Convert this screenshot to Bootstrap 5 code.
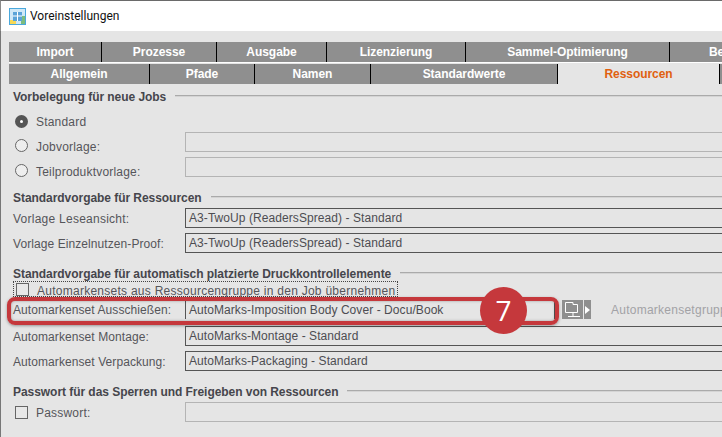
<!DOCTYPE html>
<html lang="de">
<head>
<meta charset="utf-8">
<title>Voreinstellungen</title>
<link href="https://cdn.jsdelivr.net/npm/bootstrap@5.3.0/dist/css/bootstrap.min.css" rel="stylesheet">
<style>
html,body{width:722px;height:437px;overflow:hidden;margin:0}
body{background:#e5e5e5;font-family:"Liberation Sans",Arial,sans-serif;font-size:12px;line-height:14px;color:#4a4a50;position:relative}
.win-top{height:31px;background:#fff;border-top:1px solid #6a6a6a;border-left:1px solid #8a8a8a;padding:0 0 0 8px;font-family:Roboto,"Noto Sans",sans-serif;font-size:12px;color:#111}
.win-top svg{margin-right:4px}
.pane{border-left:1px solid #777;height:406px;padding:11px 0 0 8px;width:730px}
.tabline{height:21px;margin-bottom:1px;white-space:nowrap;border-bottom:1px solid #fff;box-sizing:border-box}
.tabcell{height:20px;background:#8f8f8f;color:#fff;font-weight:700;text-align:center;line-height:21px;border-right:1px solid #000;flex:none;letter-spacing:-.05px;font-size:12px}
.tabcell.on{background:#e5e5e5;color:#e0600f}
.tabcell.end{border-right:0}
.tabcell.partial{text-align:left;padding-left:39px}
.tabline.lower{border-bottom:0;height:20px}
.tabline.lower .tabcell{line-height:20px}
.groupbox{padding-left:4px}
.grouphead{height:14px;font-weight:700;color:#46464c;letter-spacing:-.05px;font-size:12px;line-height:14px;white-space:nowrap}
.grouphead::after{content:"";flex:1;height:2px;background:#aaa;border-bottom:1px solid #d4d4d4;margin-left:9px;margin-top:-2px}
.gap-b{margin-top:14px}
.gap-c{margin-top:3px}
.gap-d{margin-top:7px}
.gap-e{margin-top:1px}
.gap-f{margin-top:5px}
.gap-m{margin-top:6px}
.gap-n{margin-top:7px}
.formrow{height:20px}
.formrow .lbl{width:172px;flex:none;letter-spacing:.08px;white-space:nowrap;color:#55555a;padding-top:1px}
.formrow .lbl.wider{letter-spacing:.25px}
.formrow .lbl.rdlbl{width:149px;letter-spacing:.2px}
.formrow .lbl.chklbl{width:auto;letter-spacing:.26px;padding-top:3px}
.fieldbox{height:20px;flex:1;border:1px solid #555;padding:0 3px;line-height:18px;letter-spacing:.07px;white-space:nowrap;overflow:hidden;color:#4d4d52}
.fieldbox.off{border-color:#b4b4b4}
.fieldbox.cut{flex:none;width:370px;height:19px;border-top:0;border-bottom:0;line-height:20px}
.rd{width:13px;height:13px;border:1px solid #666;border-radius:50%;flex:none;margin:0 8px 0 2px;background:#eee}
.rd.sel{background:#fff;border:5px solid #555}
.offrow{align-items:flex-start}
.offrow .rd{margin-top:7px}
.offrow .lbl{margin-top:7px}
.cb{width:13px;height:13px;border:1px solid #666;flex:none;margin:0 8px 0 2px;background:#e8e8e8}
.picker{width:21px;height:19px;background:#8f8f8f;flex:none;margin-left:7px}
.pickarrow{width:7px;height:19px;background:#8f8f8f;flex:none;margin-left:1px}
.ghost{color:#a2a2a6;letter-spacing:.25px;margin-left:20px;white-space:nowrap;padding-top:1px}
.dotted{border:1px dotted #444;height:16px;width:385px}
.shortrow{height:19px}
.redring{position:absolute;left:7px;top:297px;width:552px;height:28px;border:4px solid #c5383c;border-radius:8px;box-shadow:0 1px 3px rgba(0,0,0,.35),inset 0 0 3px rgba(0,0,0,.3)}
.numdot{position:absolute;left:480px;top:287px;width:47px;height:47px;border-radius:50%;background:#c5383c;color:#fff;font-family:"Open Sans",sans-serif;font-size:28px;font-weight:500;line-height:46px;text-align:center}
</style>
</head>
<body>
<div class="win-top d-flex align-items-center">
<svg width="17" height="17" viewBox="0 0 17 17"><rect x=".5" y=".5" width="16" height="16" fill="#cfe8f7" stroke="#4aa8dc"/><rect x="1" y="12" width="6" height="4" fill="#f6d957"/><rect x="12" y="8" width="4" height="8" fill="#7dbd7d"/><path d="M4 4h9v9H4z" fill="#5aa3d8"/><path d="M8.500 4v9M4 8h9" stroke="#fff" stroke-width="1"/></svg>
<span>Voreinstellungen</span>
</div>
<div class="pane">
<div class="tabline d-flex">
<div class="tabcell" style="width:93px">Import</div>
<div class="tabcell" style="width:115px">Prozesse</div>
<div class="tabcell" style="width:110px">Ausgabe</div>
<div class="tabcell" style="width:139px">Lizenzierung</div>
<div class="tabcell" style="width:204px">Sammel-Optimierung</div>
<div class="tabcell end partial" style="width:69px">Be</div>
</div>
<div class="tabline lower d-flex">
<div class="tabcell" style="width:141px">Allgemein</div>
<div class="tabcell" style="width:105px">Pfade</div>
<div class="tabcell" style="width:116px">Namen</div>
<div class="tabcell" style="width:187px">Standardwerte</div>
<div class="tabcell on" style="width:162px">Ressourcen</div>
<div class="tabcell end" style="width:9px"></div>
</div>

<div class="groupbox">
<div class="grouphead d-flex align-items-center gap-m">Vorbelegung für neue Jobs</div>
<div class="formrow d-flex align-items-center gap-d"><span class="rd sel"></span><span class="lbl rdlbl">Standard</span></div>
<div class="formrow offrow d-flex gap-e"><span class="rd"></span><span class="lbl rdlbl">Jobvorlage:</span><div class="fieldbox off"></div></div>
<div class="formrow offrow d-flex gap-f"><span class="rd"></span><span class="lbl rdlbl">Teilproduktvorlage:</span><div class="fieldbox off"></div></div>

<div class="grouphead d-flex align-items-center gap-b">Standardvorgabe für Ressourcen</div>
<div class="formrow d-flex align-items-center gap-c"><span class="lbl wider">Vorlage Leseansicht:</span><div class="fieldbox">A3-TwoUp (ReadersSpread) - Standard</div></div>
<div class="formrow d-flex align-items-center gap-f"><span class="lbl">Vorlage Einzelnutzen-Proof:</span><div class="fieldbox">A3-TwoUp (ReadersSpread) - Standard</div></div>

<div class="grouphead d-flex align-items-center gap-b">Standardvorgabe für automatisch platzierte Druckkontrollelemente</div>
<div class="dotted d-flex align-items-center"><span class="cb"></span><span class="formrow d-flex align-items-center"><span class="lbl chklbl">Automarkensets aus Ressourcengruppe in den Job übernehmen</span></span></div>
<div class="formrow shortrow d-flex align-items-center gap-c"><span class="lbl">Automarkenset Ausschießen:</span><div class="fieldbox cut">AutoMarks-Imposition Body Cover - Docu/Book</div>
<div class="picker"><svg class="d-block" width="21" height="19" viewBox="0 0 21 19" fill="none" stroke="#fff" stroke-width="1"><path d="M3.500 2.500h7.500v2h4.500v8h-12zM11 12.500v3.500M6 16.500h12"/></svg></div>
<div class="pickarrow d-flex align-items-center justify-content-center"><svg width="5" height="8" viewBox="0 0 5 8"><path d="M0 0l5 4-5 4z" fill="#fff"/></svg></div>
<span class="ghost">Automarkensetgruppe</span></div>
<div class="formrow d-flex align-items-center gap-n"><span class="lbl">Automarkenset Montage:</span><div class="fieldbox">AutoMarks-Montage - Standard</div></div>
<div class="formrow d-flex align-items-center gap-f"><span class="lbl">Automarkenset Verpackung:</span><div class="fieldbox">AutoMarks-Packaging - Standard</div></div>

<div class="grouphead d-flex align-items-center gap-b">Passwort für das Sperren und Freigeben von Ressourcen</div>
<div class="formrow d-flex align-items-center gap-c"><span class="cb"></span><span class="lbl rdlbl">Passwort:</span><div class="fieldbox off"></div></div>
</div>
</div>
<div class="redring"></div>
<div class="numdot">7</div>
</body>
</html>
